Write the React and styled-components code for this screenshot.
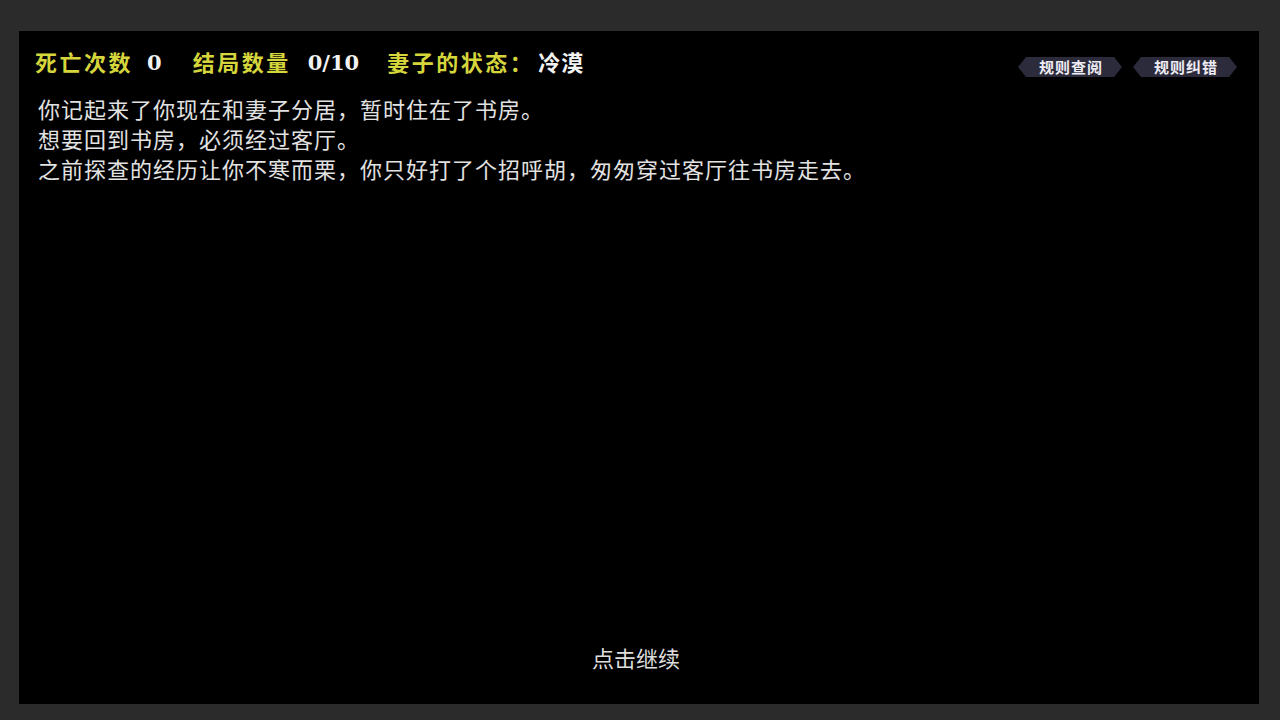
import React from "react";
import styled, { createGlobalStyle } from "styled-components";

const Global = createGlobalStyle`
  html, body { margin: 0; padding: 0; background: #2b2b2b; }
  body { font-family: "Noto Sans CJK SC", "Noto Sans", sans-serif; }
`;

const Stage = styled.div`
  width: 1280px;
  height: 720px;
  box-sizing: border-box;
  padding: 31px 21px 16px 19px;
  background: #2b2b2b;
`;

const Panel = styled.div`
  width: 1240px;
  height: 673px;
  background: #000;
  display: flex;
  flex-direction: column;
  box-sizing: border-box;
`;

const Header = styled.div`
  display: flex;
  align-items: flex-start;
  justify-content: space-between;
  padding: 14px 22px 0 16px;
`;

const Stats = styled.div`
  display: flex;
  align-items: center;
  height: 32px;
  font-family: "DejaVu Serif", "Noto Sans CJK SC", serif;
  font-weight: 700;
  font-size: 22px;
`;

const Label = styled.span`
  color: #d5d53c;
  letter-spacing: 2.5px;
  margin-right: ${(p) => p.$gap}px;
`;

const Value = styled.span`
  color: #f2f2f2;
  font-weight: 700;
  font-size: ${(p) => (p.$cjk ? 22 : 21)}px;
  margin-right: ${(p) => p.$gap || 0}px;
  letter-spacing: ${(p) => (p.$cjk ? "1px" : "0")};
  padding-top: ${(p) => (p.$cjk ? 0 : 2)}px;
`;

const Buttons = styled.div`
  display: flex;
  gap: 11px;
  margin-top: 12px;
`;

const HexButton = styled.button`
  width: 104px;
  height: 20px;
  border: none;
  padding: 0 0 0 2px;
  background: #2c2b3c;
  clip-path: polygon(8px 0, 96px 0, 104px 50%, 96px 100%, 8px 100%, 0 50%);
  color: #eeebf4;
  font-family: "Noto Sans CJK SC", sans-serif;
  font-weight: 700;
  font-size: 15px;
  letter-spacing: 1px;
  line-height: 20px;
  cursor: pointer;
`;

const Story = styled.div`
  margin-top: 16px;
  padding-left: 19px;
  font-size: 22px;
  line-height: 30px;
  letter-spacing: 1px;
  color: #e2e2e2;
`;

const Line = styled.div``;

const Continue = styled.div`
  margin-top: auto;
  padding-bottom: 32px;
  text-align: center;
  font-size: 22px;
  line-height: 30px;
  color: #dedede;
  padding-right: 6px;
`;

export default function App() {
  const lines = [
    "你记起来了你现在和妻子分居，暂时住在了书房。",
    "想要回到书房，必须经过客厅。",
    "之前探查的经历让你不寒而栗，你只好打了个招呼胡，匆匆穿过客厅往书房走去。",
  ];
  return (
    <>
      <Global />
      <Stage>
        <Panel>
          <Header>
            <Stats>
              <Label $gap={14}>死亡次数</Label>
              <Value $gap={31}>0</Value>
              <Label $gap={17}>结局数量</Label>
              <Value $gap={28}>0/10</Value>
              <Label $gap={4}>妻子的状态：</Label>
              <Value $cjk>冷漠</Value>
            </Stats>
            <Buttons>
              <HexButton>规则查阅</HexButton>
              <HexButton>规则纠错</HexButton>
            </Buttons>
          </Header>
          <Story>
            {lines.map((l) => (
              <Line key={l}>{l}</Line>
            ))}
          </Story>
          <Continue>点击继续</Continue>
        </Panel>
      </Stage>
    </>
  );
}
